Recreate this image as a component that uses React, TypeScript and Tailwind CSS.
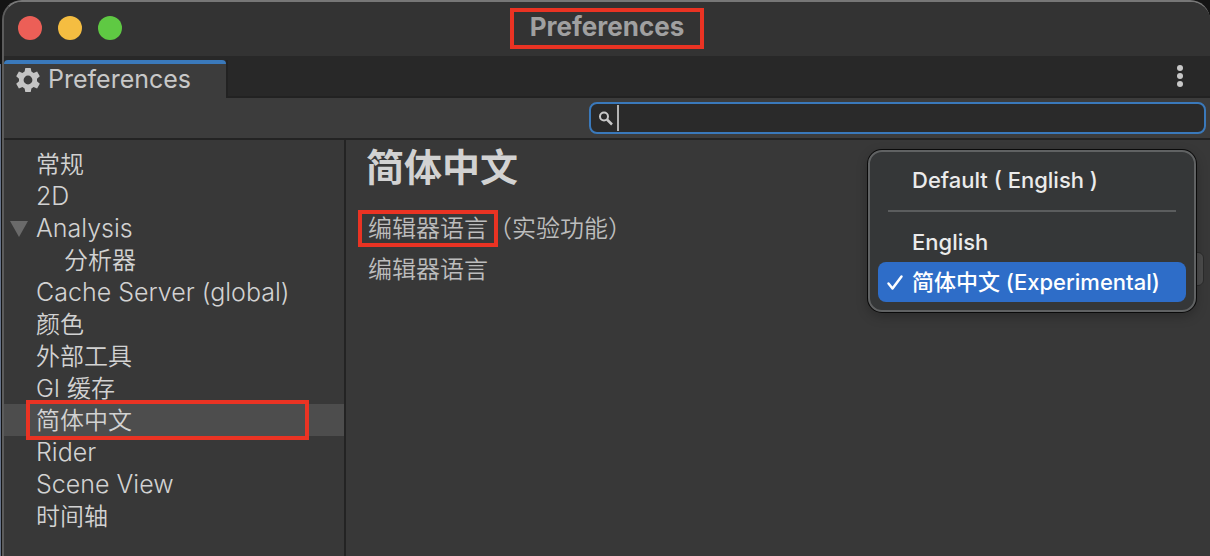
import React from 'react';
import { clsx } from 'clsx';

type Section = {
    label: string;
    latin?: boolean;
    nested?: boolean;
    expanded?: boolean;
    selected?: boolean;
};

const sections: Section[] = [
    { label: '常规' },
    { label: '2D', latin: true },
    { label: 'Analysis', latin: true, expanded: true },
    { label: '分析器', nested: true },
    { label: 'Cache Server (global)', latin: true },
    { label: '颜色' },
    { label: '外部工具' },
    { label: 'GI 缓存' },
    { label: '简体中文', selected: true },
    { label: 'Rider', latin: true },
    { label: 'Scene View', latin: true },
    { label: '时间轴' },
];

const GearIcon = () => (
    <svg className="size-6 shrink-0" viewBox="0 0 24 24" fill="#c4c4c4" aria-hidden="true">
        <path
            fillRule="evenodd"
            d="M9.3 0h5.4l.7 3.6 2.2 1.3 3.500-1.300L23.800 8.200l-2.800 2.500v2.600l2.800 2.500-2.700 4.600-3.500-1.300-2.200 1.300-.7 3.600H9.300l-.7-3.600-2.200-1.300-3.500 1.300L.2 15.800 3 13.300v-2.600L.2 8.200l2.700-4.600 3.500 1.300 2.200-1.300zM12 7.600a4.400 4.400 0 1 0 0 8.800 4.400 4.400 0 0 0 0-8.800z"
        />
    </svg>
);

const SearchIcon = () => (
    <svg className="size-4 shrink-0" viewBox="0 0 16 16" fill="none" stroke="#c8c8c8" aria-hidden="true">
        <circle cx="6" cy="6.5" r="4" strokeWidth="2" />
        <path d="M9 9.500l5 5" strokeWidth="2.500" />
    </svg>
);

const CheckIcon = () => (
    <svg className="size-5 shrink-0" viewBox="0 0 20 20" fill="none" stroke="#ffffff" aria-hidden="true">
        <path d="M2.500 11.500l4 5L15.500 4.500" strokeWidth="2.500" strokeLinecap="round" strokeLinejoin="round" />
    </svg>
);

const TitleBar = () => (
    <header className="relative flex h-[54px] items-start justify-center bg-[#333333] pt-1.5">
        <div className="absolute top-3.5 left-3.5 flex gap-4">
            <button type="button" aria-label="Close" className="size-6 rounded-full bg-[#ec5f57]" />
            <button type="button" aria-label="Minimize" className="size-6 rounded-full bg-[#f5bd41]" />
            <button type="button" aria-label="Zoom" className="size-6 rounded-full bg-[#5fc943]" />
        </div>
        <h1 className="border-4 border-[#ea3323] px-4 pb-1 text-[26px] leading-[29px] font-bold text-[#a0a0a0]">
            Preferences
        </h1>
    </header>
);

const TabBar = () => (
    <div className="flex items-stretch justify-between bg-[#282828] pt-1">
        <button
            type="button"
            className="flex h-[38px] w-[222px] items-center gap-2 rounded-t-[4px] border-t-4 border-[#3a79bb] bg-[#3c3c3c] pb-0.5 pl-3 text-[25px] font-normal text-[#c8c8c8]"
        >
            <GearIcon />
            Preferences
        </button>
        <div className="flex flex-1 justify-end border-b-2 border-l-2 border-[#222222] pr-[27px]">
            <button type="button" aria-label="More" className="flex h-8 flex-col items-center justify-center gap-0.5">
                <span className="size-1.5 rounded-full bg-[#c8c8c8]" />
                <span className="size-1.5 rounded-full bg-[#c8c8c8]" />
                <span className="size-1.5 rounded-full bg-[#c8c8c8]" />
            </button>
        </div>
    </div>
);

const Toolbar = () => (
    <div className="flex justify-end border-b-2 border-[#232323] bg-[#3c3c3c] py-1 pr-1">
        <label className="flex h-8 w-[51.3%] items-center rounded-lg border-2 border-[#3a79bb] bg-[#2a2a2a] pl-[7px]">
            <SearchIcon />
            <span className="ml-[3px] h-[26px] w-0.5 bg-[#b4b4b4]" />
            <input
                type="text"
                aria-label="Search"
                className="min-w-0 flex-1 bg-transparent px-1 text-xl text-[#d0d0d0] outline-none"
            />
        </label>
    </div>
);

const Sidebar = () => (
    <nav className="w-[342px] shrink-0 border-r-2 border-[#232323] pt-2">
        {sections.map((section) => (
            <button
                key={section.label}
                type="button"
                className={clsx(
                    'relative flex h-8 w-full items-center pt-0.5 text-left font-[350] text-[#d2d2d2]',
                    section.latin ? 'text-[25px]' : 'text-2xl',
                    section.nested ? 'pl-[60px]' : 'pl-8',
                    section.selected && 'bg-[#4d4d4d]',
                )}
            >
                {section.expanded && (
                    <svg className="absolute left-1.5 h-4 w-[18px]" viewBox="0 0 18 16" fill="#6a6a6a" aria-hidden="true">
                        <path d="M0 0h18L9 16z" />
                    </svg>
                )}
                {section.label}
                {section.selected && (
                    <span className="absolute -inset-y-1 right-[35px] left-[22px] z-10 border-4 border-[#ea3323]" />
                )}
            </button>
        ))}
    </nav>
);

const LanguageMenu = () => (
    <div
        role="listbox"
        aria-label="编辑器语言"
        className="absolute -top-[103px] right-3.5 w-[328px] rounded-[14px] border-2 border-[#606263] bg-[#353738] p-2 text-[22px] font-medium text-[#ebebeb] shadow-[0_0_0_1px_#0a0a0a,0_4px_12px_rgba(0,0,0,0.25)]"
    >
        <button type="button" role="option" aria-selected="false" className="flex h-10 w-full items-center pl-[34px]">
            Default ( English )
        </button>
        <hr className="mx-2.5 my-2.5 border-t-2 border-[#5b5d5e]" />
        <button type="button" role="option" aria-selected="false" className="flex h-10 w-full items-center pl-[34px]">
            English
        </button>
        <button
            type="button"
            role="option"
            aria-selected="true"
            className="flex h-10 w-full items-center gap-1.5 rounded-lg bg-[#2e6dc8] pl-2 whitespace-nowrap text-white"
        >
            <CheckIcon />
            简体中文 (Experimental)
        </button>
    </div>
);

const LanguagePanel = () => (
    <main className="min-w-0 flex-1 pt-1 pl-3">
        <h2 className="pl-2 text-[38px] leading-[46px] font-bold text-[#d2d2d2]">简体中文</h2>
        <p className="mt-5 flex items-center text-2xl font-[350] text-[#bdbdbd]">
            <span className="border-4 border-[#ea3323] px-1.5 leading-[29px] whitespace-nowrap">编辑器语言</span>
            <span className="-ml-2.5 leading-[29px] whitespace-nowrap">（实验功能）</span>
        </p>
        <div className="relative mt-1.5 flex h-8 items-center justify-between pr-1.5">
            <label htmlFor="language" className="shrink-0 pt-0.5 pl-2.5 text-2xl font-[350] text-[#bdbdbd]">
                编辑器语言
            </label>
            <select
                id="language"
                defaultValue="zh"
                className="h-[34px] w-80 appearance-none rounded-md border border-[#2c2c2c] bg-[#4b4b4b] pl-3 text-xl text-[#e4e4e4]"
            >
                <option value="zh">简体中文 (Experimental)</option>
                <option value="en">English</option>
            </select>
            <LanguageMenu />
        </div>
    </main>
);

const App = () => {
    return (
        <div className="flex min-h-screen bg-[#141414] font-['Inter','Noto_Sans_CJK_SC',sans-serif]">
            {/* Edge of the window behind */}
            <div className="mt-16 mr-px w-px bg-[#66738a]" />
            <div className="flex flex-1 flex-col overflow-hidden rounded-t-[20px] border-t-2 border-l-2 border-[#5c5c5c] border-t-[#777777] bg-[#383838]">
                <TitleBar />
                <TabBar />
                <Toolbar />
                <div className="flex flex-1">
                    <Sidebar />
                    <LanguagePanel />
                </div>
            </div>
        </div>
    );
};

export default App;
